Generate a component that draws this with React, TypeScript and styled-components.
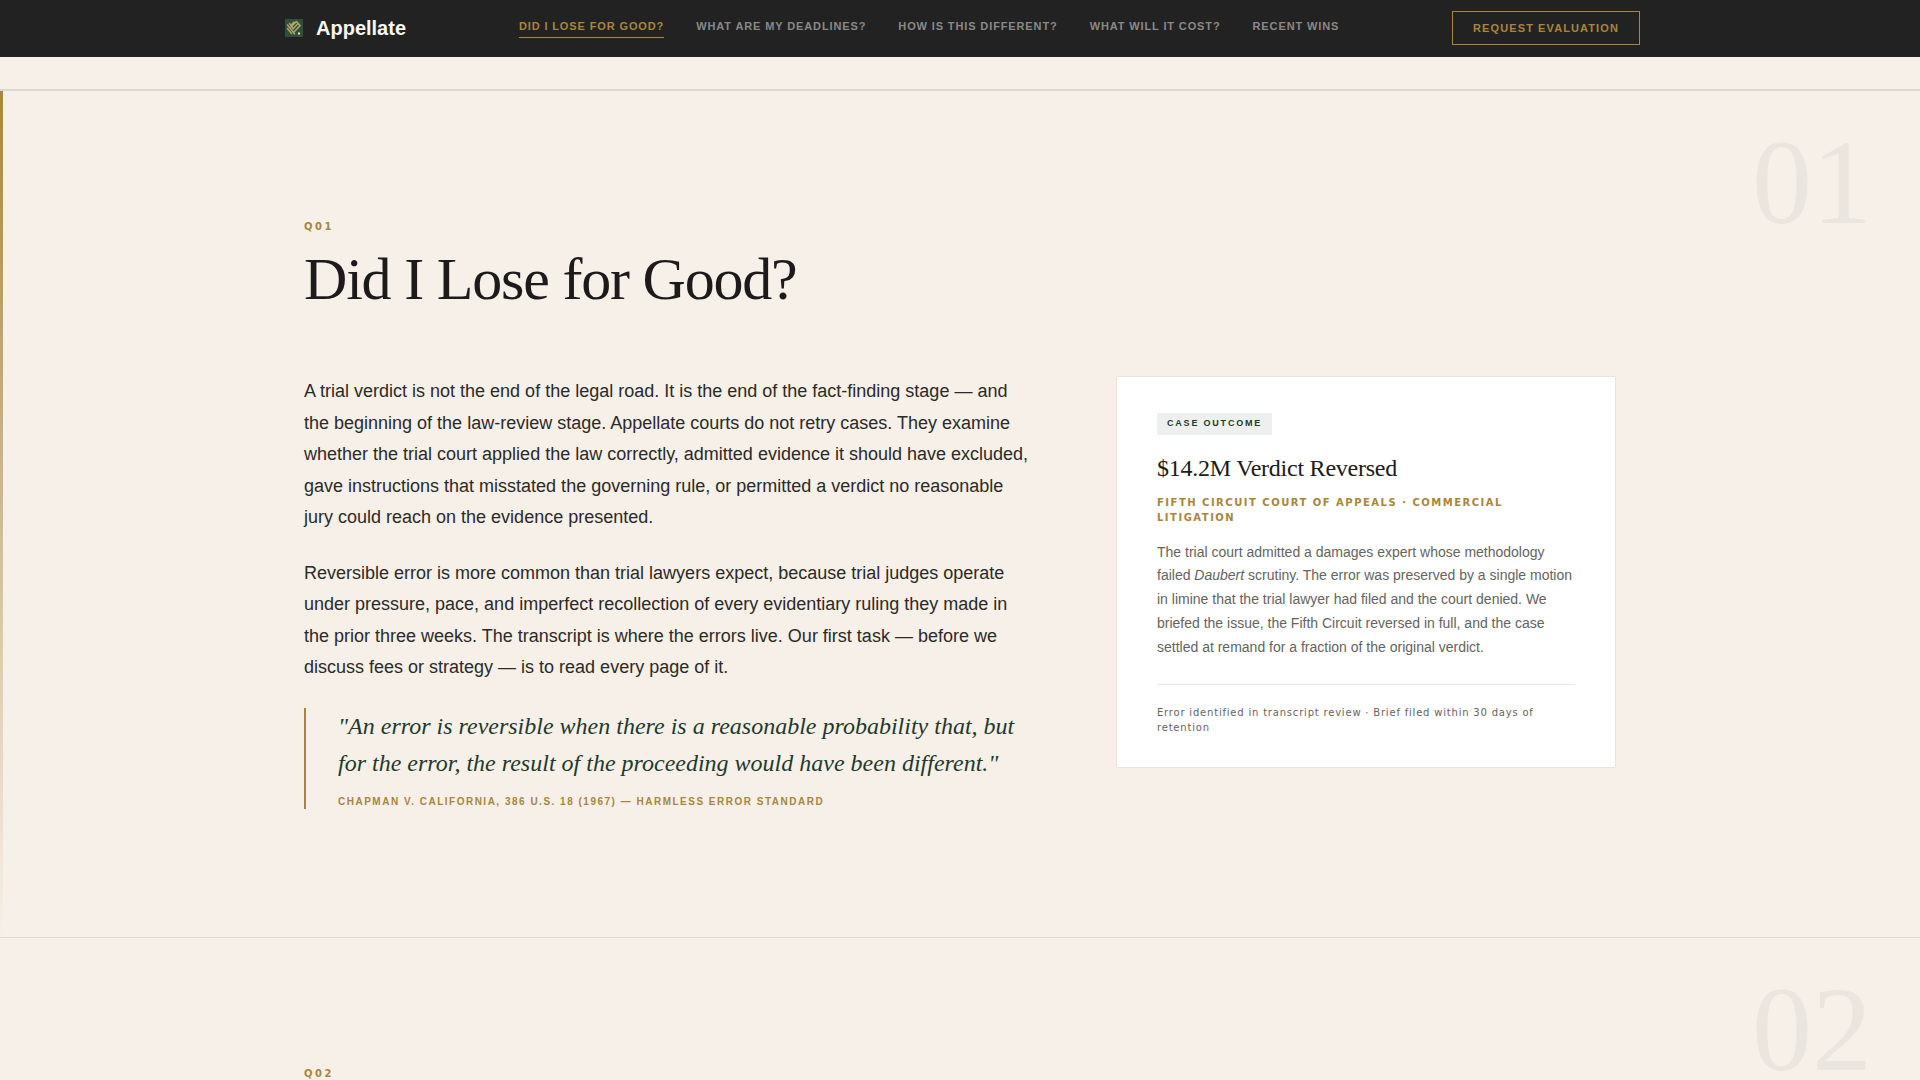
import React from "react";
import styled, { createGlobalStyle } from "styled-components";

const gold = "#a8863c";
const ink = "#1c1a1a";
const green = "#1f3a2d";
const cream = "#f6f0e8";
const rule = "#dedad3";
const sans = `"Liberation Sans", Arial, sans-serif`;
const serif = `"Liberation Serif", "Times New Roman", serif`;
const label = `"DejaVu Sans", Verdana, sans-serif`;

const GlobalStyle = createGlobalStyle`
  *, *::before, *::after { box-sizing: border-box; }
  body { margin: 0; background: ${cream}; color: ${ink}; font-family: ${sans}; }
  h2, h3, p, blockquote, figure { margin: 0; font-weight: 400; }
`;

const Page = styled.div`
  height: 100vh;
  overflow: hidden;
`;

const NavBar = styled.header`
  border-bottom: 1px solid #262424;
  background: #222223;
`;

const NavInner = styled.div`
  display: flex;
  align-items: center;
  justify-content: space-between;
  max-width: 1360px;
  height: 56px;
  margin: 0 auto;
`;

const Brand = styled.a`
  display: flex;
  align-items: center;
  gap: 8px;
  color: #f8f6f2;
  font-size: 20px;
  font-weight: 700;
  line-height: 24px;
  text-decoration: none;
`;

const BrandMark = styled.span`
  display: flex;
  justify-content: center;
  width: 28px;
`;

const NavLinks = styled.nav`
  display: flex;
  gap: 32px;
`;

const NavLink = styled.a<{ $active?: boolean }>`
  padding-bottom: 4px;
  border-bottom: 1px solid ${(p) => (p.$active ? gold : "transparent")};
  color: ${(p) => (p.$active ? gold : "#8a8988")};
  font-size: 11px;
  font-weight: 700;
  line-height: 14px;
  letter-spacing: 0.08em;
  text-transform: uppercase;
  text-decoration: none;
`;

const EvaluationButton = styled.button`
  padding: 10px 20px;
  border: 1px solid ${gold};
  background: transparent;
  color: ${gold};
  font-family: ${sans};
  font-size: 11px;
  font-weight: 700;
  line-height: 12px;
  letter-spacing: 0.1em;
  text-transform: uppercase;
  cursor: pointer;
`;

const Intro = styled.div`
  height: 34px;
  border-bottom: 2px solid ${rule};
`;

const Section = styled.section<{ $accent?: boolean }>`
  position: relative;
  padding: 128px 0;
  border-bottom: 1px solid ${rule};

  &::before {
    content: "";
    display: ${(p) => (p.$accent ? "block" : "none")};
    position: absolute;
    top: 0;
    bottom: 0;
    left: 0;
    width: 3px;
    background: linear-gradient(to bottom, ${gold}, transparent);
  }
`;

const GhostNumber = styled.span`
  position: absolute;
  top: 32px;
  right: 48px;
  color: #eae6df;
  font-family: ${serif};
  font-size: 120px;
  line-height: 120px;
`;

const Container = styled.div`
  max-width: 1312px;
  margin: 0 auto;
`;

const QuestionTag = styled.p`
  color: ${gold};
  font-family: ${label};
  font-size: 10px;
  font-weight: 700;
  line-height: 15px;
  letter-spacing: 0.25em;
`;

const Heading = styled.h2`
  && { margin: 12px 0 64px; }
  font-family: ${serif};
  font-size: 60px;
  line-height: 66px;
  letter-spacing: -0.02em;
`;

const Columns = styled.div`
  display: grid;
  grid-template-columns: 1fr 500px;
  align-items: start;
  gap: 80px;
`;

const Article = styled.div`
  display: flex;
  flex-direction: column;
  gap: 24px;
`;

const Paragraph = styled.p`
  color: #2c2a28;
  font-size: 18px;
  line-height: 1.75;
`;

const Quote = styled.figure`
  display: flex;
  flex-direction: column;
  gap: 12px;
  padding-left: 32px;
  border-left: 2px solid ${gold};
`;

const QuoteText = styled.blockquote`
  color: ${green};
  font-family: ${serif};
  font-size: 24px;
  font-style: italic;
  line-height: 37px;
`;

const QuoteSource = styled.figcaption`
  color: ${gold};
  font-size: 10px;
  font-weight: 700;
  line-height: 15px;
  letter-spacing: 0.15em;
  text-transform: uppercase;
`;

const Card = styled.aside`
  padding: 36px 40px 32px;
  border: 1px solid #e8e6e0;
  border-radius: 2px;
  background: #fff;
`;

const CardBadge = styled.span`
  display: inline-block;
  padding: 4px 10px 6px;
  background: #edf0ef;
  color: ${green};
  font-size: 9px;
  font-weight: 700;
  line-height: 12px;
  letter-spacing: 0.2em;
  text-transform: uppercase;
  vertical-align: top;
`;

const CardTitle = styled.h3`
  && { margin-top: 20px; }
  font-family: ${serif};
  font-size: 24px;
  line-height: 1.15;
  letter-spacing: -0.01em;
`;

const CardCourt = styled.p`
  && { margin: 12px 0 16px; }
  color: ${gold};
  font-family: ${label};
  font-size: 10px;
  font-weight: 700;
  line-height: 15px;
  letter-spacing: 0.15em;
  text-transform: uppercase;
`;

const CardBody = styled.p`
  color: #66635f;
  font-size: 14px;
  line-height: 1.7;
`;

const CardNote = styled.p`
  && { margin-top: 24px; }
  padding-top: 20px;
  border-top: 1px solid #e8e6e4;
  color: #66635f;
  font-family: ${label};
  font-size: 10px;
  line-height: 15px;
  letter-spacing: 0.08em;
`;

const links = [
  "Did I Lose for Good?",
  "What Are My Deadlines?",
  "How Is This Different?",
  "What Will It Cost?",
  "Recent Wins",
];

function Logo() {
  return (
    <svg width="18" height="18" viewBox="0 0 18 18" aria-hidden="true">
      <rect width="18" height="18" fill="#2f4f3a" />
      <g fill="none" stroke="#b0a468" strokeWidth="1.5" strokeLinecap="round">
        <path d="M2.500 6l4.500 5.500 2.500 3.500" />
        <path d="M4.500 4.500l3.500 4.500M2.500 9.500l4 5" />
        <path d="M6 8l5.500-5.500M8 10l5-5.500M9 13l6-6.500M6.500 6l2.500-3" />
        <path d="M11.500 2.500l3.500 4" />
      </g>
      <rect x="13" y="13.500" width="2" height="2" fill="#e9e3bd" />
    </svg>
  );
}

export default function App() {
  return (
    <Page>
      <GlobalStyle />
      <NavBar>
        <NavInner>
          <Brand href="#top">
            <BrandMark>
              <Logo />
            </BrandMark>
            Appellate
          </Brand>
          <NavLinks>
            {links.map((text, i) => (
              <NavLink key={text} href={`#q${i + 1}`} $active={i === 0}>
                {text}
              </NavLink>
            ))}
          </NavLinks>
          <EvaluationButton type="button">Request Evaluation</EvaluationButton>
        </NavInner>
      </NavBar>
      <main>
        <Intro />
        <Section id="q1" $accent>
          <GhostNumber aria-hidden="true">01</GhostNumber>
          <Container>
            <QuestionTag>Q01</QuestionTag>
            <Heading>Did I Lose for Good?</Heading>
            <Columns>
              <Article>
                <Paragraph>
                  A trial verdict is not the end of the legal road. It is the end of the
                  fact-finding stage — and the beginning of the law-review stage. Appellate
                  courts do not retry cases. They examine whether the trial court applied the
                  law correctly, admitted evidence it should have excluded, gave instructions
                  that misstated the governing rule, or permitted a verdict no reasonable jury
                  could reach on the evidence presented.
                </Paragraph>
                <Paragraph>
                  Reversible error is more common than trial lawyers expect, because trial
                  judges operate under pressure, pace, and imperfect recollection of every
                  evidentiary ruling they made in the prior three weeks. The transcript is where
                  the errors live. Our first task — before we discuss fees or strategy — is to
                  read every page of it.
                </Paragraph>
                <Quote>
                  <QuoteText>
                    "An error is reversible when there is a reasonable probability that, but for
                    the error, the result of the proceeding would have been different."
                  </QuoteText>
                  <QuoteSource>
                    Chapman v. California, 386 U.S. 18 (1967) — Harmless Error Standard
                  </QuoteSource>
                </Quote>
              </Article>
              <Card>
                <CardBadge>Case Outcome</CardBadge>
                <CardTitle>$14.2M Verdict Reversed</CardTitle>
                <CardCourt>Fifth Circuit Court of Appeals · Commercial Litigation</CardCourt>
                <CardBody>
                  The trial court admitted a damages expert whose methodology failed{" "}
                  <em>Daubert</em> scrutiny. The error was preserved by a single motion in limine
                  that the trial lawyer had filed and the court denied. We briefed the issue, the
                  Fifth Circuit reversed in full, and the case settled at remand for a fraction
                  of the original verdict.
                </CardBody>
                <CardNote>
                  Error identified in transcript review · Brief filed within 30 days of retention
                </CardNote>
              </Card>
            </Columns>
          </Container>
        </Section>
        <Section id="q2">
          <GhostNumber aria-hidden="true">02</GhostNumber>
          <Container>
            <QuestionTag>Q02</QuestionTag>
          </Container>
        </Section>
      </main>
    </Page>
  );
}
